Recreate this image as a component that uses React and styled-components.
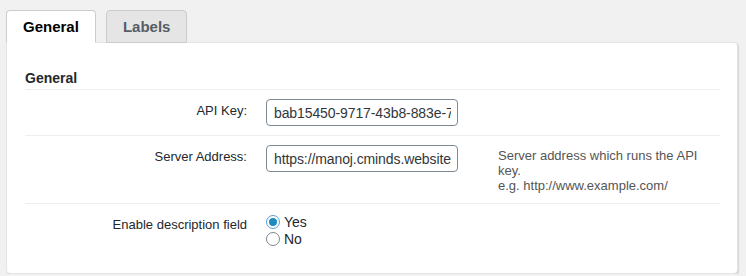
import React, { useState } from "react";
import styled, { createGlobalStyle } from "styled-components";

const GlobalStyle = createGlobalStyle`
  body {
    margin: 0;
    background: #f1f1f1;
    font-family: "Liberation Sans", Arial, sans-serif;
    color: #23282d;
  }
`;

const Page = styled.div`
  padding: 10px 8px 0 6px;
`;

const Tabs = styled.div`
  display: flex;
  gap: 10px;
`;

const Tab = styled.button`
  height: 33px;
  padding: 0 16px;
  font-family: inherit;
  font-size: 15px;
  font-weight: 700;
  border: 1px solid #ccc;
  border-radius: 4px 4px 0 0;
  background: ${({ active }) => (active ? "#fff" : "#e5e5e5")};
  color: ${({ active }) => (active ? "#000" : "#555d66")};
  border-bottom-color: ${({ active }) => (active ? "#fff" : "#ccc")};
  margin-bottom: -1px;
  position: relative;
  z-index: ${({ active }) => (active ? 1 : 0)};
  cursor: pointer;
  outline: none;
`;

const Panel = styled.div`
  background: #fff;
  border: 1px solid #e2e4e7;
  border-radius: 0 4px 4px 4px;
  box-shadow: 1px 1px 1px rgba(0, 0, 0, 0.12);
  padding: 0 17px 17px 18px;
`;

const Heading = styled.h3`
  margin: 0;
  padding: 26px 0 2px;
  font-size: 14px;
  line-height: 18px;
  font-weight: 700;
  color: #23282d;
  border-bottom: 1px solid #eee;
`;

const Row = styled.div`
  display: grid;
  grid-template-columns: 222px 192px 1fr;
  column-gap: 19px;
  align-items: start;
  padding: 9px 0;
  border-bottom: ${({ last }) => (last ? "none" : "1px solid #eee")};
`;

const Label = styled.label`
  text-align: right;
  font-size: 13px;
  line-height: 18px;
  padding-top: 3px;
  color: #23282d;
`;

const Input = styled.input`
  box-sizing: border-box;
  width: 192px;
  height: 27px;
  padding: 0 6px 0 7px;
  border: 1px solid #7e8993;
  border-radius: 4px;
  font-family: inherit;
  font-size: 14px;
  letter-spacing: -0.1px;
  color: #32373c;
  background: #fff;
  outline: none;
`;

const Description = styled.p`
  margin: 0;
  padding: 3px 0 1px 21px;
  font-size: 13px;
  line-height: 15px;
  color: #555;
`;

const Radios = styled.div`
  display: flex;
  flex-direction: column;
`;

const RadioOption = styled.label`
  display: flex;
  align-items: center;
  gap: 4px;
  height: 17px;
  font-size: 14px;
  color: #23282d;
  cursor: pointer;
`;

const RadioCircle = styled.span`
  box-sizing: border-box;
  width: 14px;
  height: 14px;
  border-radius: 50%;
  border: 1px solid ${({ checked }) => (checked ? "#5b9dd9" : "#7e8993")};
  background: #fff;
  display: flex;
  align-items: center;
  justify-content: center;
  &::after {
    content: "";
    width: 8px;
    height: 8px;
    border-radius: 50%;
    background: #1e8cbe;
    display: ${({ checked }) => (checked ? "block" : "none")};
  }
`;

const App = () => {
  const [tab, setTab] = useState(0);
  const [enabled, setEnabled] = useState(true);

  return (
    <Page>
      <GlobalStyle />
      <Tabs>
        <Tab active={tab === 0} onClick={() => setTab(0)}>General</Tab>
        <Tab active={tab === 1} onClick={() => setTab(1)}>Labels</Tab>
      </Tabs>
      <Panel>
        <Heading>General</Heading>
        <Row>
          <Label>API Key:</Label>
          <Input defaultValue="bab15450-9717-43b8-883e-7c1a2f0d9e41" />
        </Row>
        <Row>
          <Label>Server Address:</Label>
          <Input defaultValue="https://manoj.cminds.website/" />
          <Description>
            Server address which runs the API key.
            <br />
            e.g. http://www.example.com/
          </Description>
        </Row>
        <Row last>
          <Label>Enable description field</Label>
          <Radios>
            <RadioOption onClick={() => setEnabled(true)}>
              <RadioCircle checked={enabled} />
              Yes
            </RadioOption>
            <RadioOption onClick={() => setEnabled(false)}>
              <RadioCircle checked={!enabled} />
              No
            </RadioOption>
          </Radios>
        </Row>
      </Panel>
    </Page>
  );
};

export default App;
